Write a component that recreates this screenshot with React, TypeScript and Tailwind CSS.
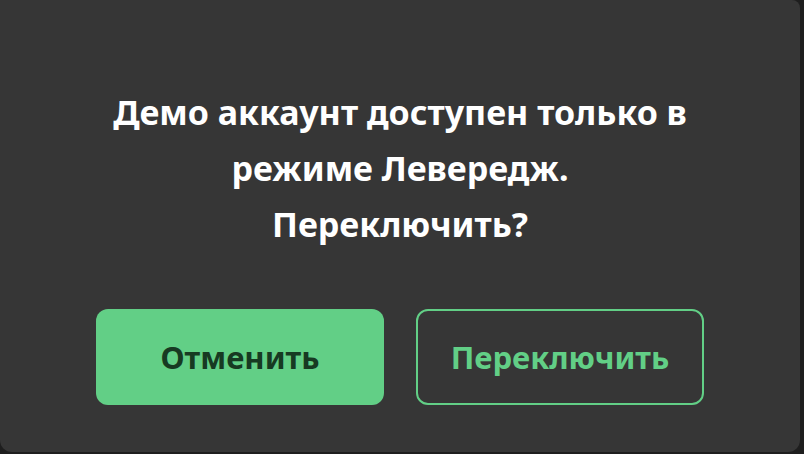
import React from "react";

export default function App() {
    return (
        <div className="w-[804px] h-[454px] bg-[#1e1e1e] overflow-hidden" style={{ fontFamily: '"Noto Sans", "Open Sans", sans-serif' }}>
            <div className="w-[800px] h-[452px] bg-[#363636] rounded-b-xl rounded-tr-lg flex flex-col items-center pt-[84px] px-[96px]">
                {/* Message */}
                <p className="text-white font-bold text-[34px] leading-[56px] text-center">
                    Демо аккаунт доступен только в<br />
                    режиме Левередж.<br />
                    Переключить?
                </p>

                {/* Actions */}
                <div className="mt-[57px] w-full grid grid-cols-2 gap-8">
                    <button className="h-[96px] rounded-xl bg-[#62cf86] text-[#173a22] font-bold text-[31px]">
                        Отменить
                    </button>
                    <button className="h-[96px] rounded-xl border-2 border-[#62cf86] text-[#62cf86] font-bold text-[31px]">
                        Переключить
                    </button>
                </div>
            </div>
        </div>
    );
}
